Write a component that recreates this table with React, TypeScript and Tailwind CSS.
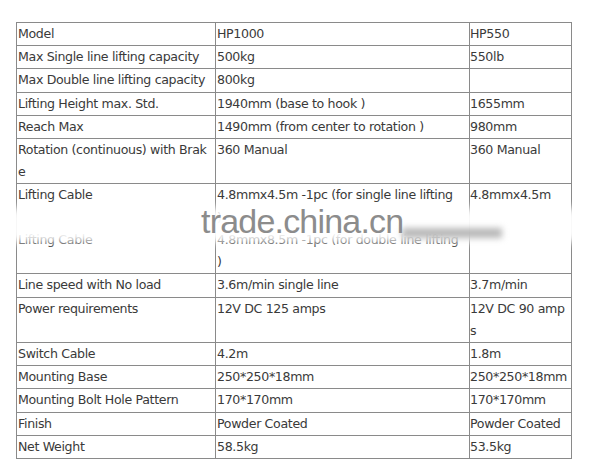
import React from "react"

const rows: { label: React.ReactNode; a: React.ReactNode; b: React.ReactNode; h?: string }[] = [
  { label: "Model", a: "HP1000", b: "HP550" },
  { label: "Max Single line lifting capacity", a: "500kg", b: "550lb" },
  { label: "Max Double line lifting capacity", a: "800kg", b: "" },
  { label: "Lifting Height max. Std.", a: "1940mm (base to hook )", b: "1655mm" },
  { label: "Reach Max", a: "1490mm (from center to rotation )", b: "980mm" },
  {
    label: (
      <>
        Rotation (continuous) with Brak
        <br />e
      </>
    ),
    a: "360 Manual",
    b: "360 Manual",
  },
  {
    label: (
      <>
        Lifting Cable
        <br />
        <br />
        Lifting Cable
      </>
    ),
    a: (
      <>
        4.8mmx4.5m -1pc (for single line lifting
        <br />)
        <br />
        4.8mmx8.5m -1pc (for double line lifting
        <br />)
      </>
    ),
    b: "4.8mmx4.5m",
    h: "h-[90px]",
  },
  { label: "Line speed with No load", a: "3.6m/min single line", b: "3.7m/min" },
  {
    label: "Power requirements",
    a: "12V DC 125 amps",
    b: (
      <>
        12V DC 90 amp
        <br />s
      </>
    ),
  },
  { label: "Switch Cable", a: "4.2m", b: "1.8m" },
  { label: "Mounting Base", a: "250*250*18mm", b: "250*250*18mm" },
  { label: "Mounting Bolt Hole Pattern", a: "170*170mm", b: "170*170mm" },
  { label: "Finish", a: "Powder Coated", b: "Powder Coated" },
  { label: "Net Weight", a: "58.5kg", b: "53.5kg" },
]

export default function App() {
  return (
    <div className="relative w-[598px] h-[476px] bg-white pl-[16px] pt-[22px] font-['DejaVu_Sans',sans-serif] text-[12.6px] tracking-[-0.35px] text-[#3a3a3a] overflow-hidden">
      <table className="border-collapse table-fixed w-[555px]">
        <colgroup>
          <col className="w-[199px]" />
          <col className="w-[254px]" />
          <col className="w-[102px]" />
        </colgroup>
        <tbody>
          {rows.map((r, i) => (
            <tr key={i} className={r.h}>
              <td className="border border-[#8a8a8a] px-px align-top leading-[22.2px] whitespace-nowrap overflow-hidden">
                {r.label}
              </td>
              <td className="border border-[#8a8a8a] px-px align-top leading-[22.2px] whitespace-nowrap overflow-hidden">
                {r.a}
              </td>
              <td className="border border-[#8a8a8a] pl-0 align-top leading-[22.2px] whitespace-nowrap overflow-hidden">
                {r.b}
              </td>
            </tr>
          ))}
        </tbody>
      </table>

      {/* watermark */}
      <div className="absolute left-[8px] top-[208px] w-[585px] h-[34px] bg-white/95 blur-[4px]" />
      <div className="absolute left-[402px] top-[228px] w-[100px] h-[10px] bg-[#9a9a9a]/70 blur-[3px]" />
      <div className="absolute left-[201px] top-[204px] font-['Liberation_Sans',sans-serif] text-[34px] leading-none text-[#8c8c8c] tracking-[-0.8px]">
        trade.china.cn
      </div>
    </div>
  )
}
